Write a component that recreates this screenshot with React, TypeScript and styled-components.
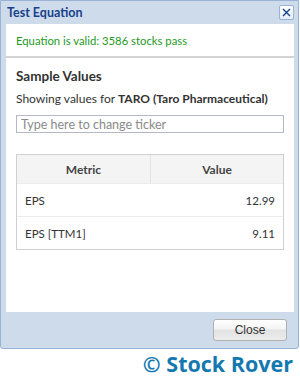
import React from 'react';
import styled, { createGlobalStyle } from 'styled-components';

const UI_FONT = "Lato, 'Liberation Sans', sans-serif";

const GlobalStyle = createGlobalStyle`
  html, body {
    margin: 0;
    padding: 0;
    background: #ffffff;
  }
  body {
    font-family: ${UI_FONT};
  }
`;

const Page = styled.div`
  width: 300px;
  height: 382px;
  display: flex;
  flex-direction: column;
`;

const Window = styled.div`
  width: 299px;
  height: 350px;
  box-sizing: border-box;
  border: 1px solid #99b3d6;
  border-radius: 0 0 3px 3px;
  background: #cedbea;
  display: flex;
  flex-direction: column;
  padding: 0 4px 0 5px;
`;

const Header = styled.div`
  height: 23px;
  display: flex;
  align-items: center;
  justify-content: space-between;
  padding: 0 0 0 1px;
`;

const Title = styled.span`
  font-size: 12.5px;
  font-weight: 700;
  color: #15428b;
`;

const CloseIcon = styled.button`
  width: 15px;
  height: 15px;
  padding: 0;
  border: 1px solid #99b3d6;
  border-radius: 2px;
  background: linear-gradient(#ffffff, #e4ecf6);
  display: flex;
  align-items: center;
  justify-content: center;
`;

const Body = styled.div`
  flex: 0 0 288px;
  background: #ffffff;
  display: flex;
  flex-direction: column;
`;

const Status = styled.div`
  height: 34px;
  border-bottom: 2px solid #d4d4d4;
  box-sizing: border-box;
  display: flex;
  align-items: center;
  padding: 0 10px;
  font-size: 11.3px;
  color: #1e9a1e;
`;

const Section = styled.div`
  padding: 9px 10px 0;
  display: flex;
  flex-direction: column;
`;

const SectionTitle = styled.div`
  font-size: 13.5px;
  font-weight: 700;
  color: #333333;
  line-height: 18px;
`;

const Caption = styled.div`
  margin-top: 6px;
  font-size: 12px;
  color: #333333;
  line-height: 16px;
  white-space: nowrap;

  b {
    font-weight: 700;
  }
`;

const TickerInput = styled.input`
  margin-top: 8px;
  height: 18px;
  box-sizing: border-box;
  border: 1px solid #b5b8c8;
  padding: 0 4px;
  font-family: ${UI_FONT};
  font-size: 12.5px;
  color: #333333;
  outline: none;

  &::placeholder {
    color: #8a8a8a;
  }
`;

const Table = styled.div`
  margin-top: 21px;
  border: 1px solid #d0d0d0;
  display: flex;
  flex-direction: column;
`;

const HeadRow = styled.div`
  display: grid;
  grid-template-columns: 133px 1fr;
  height: 28px;
  background: #f4f4f4;
  border-bottom: 1px solid #ececec;
`;

const HeadCell = styled.div`
  display: flex;
  align-items: center;
  justify-content: center;
  font-size: 12px;
  font-weight: 700;
  color: #444444;

  & + & {
    border-left: 1px solid #e4e4e4;
  }
`;

const Row = styled.div<{ $last?: boolean }>`
  display: flex;
  align-items: center;
  justify-content: space-between;
  height: 32px;
  padding: 0 8px;
  font-size: 11.5px;
  color: #333333;
  border-bottom: ${(p) => (p.$last ? 'none' : '1px solid #ececec')};
`;

const Footer = styled.div`
  flex: 1;
  display: flex;
  align-items: center;
  justify-content: flex-end;
  padding-right: 7px;
`;

const Button = styled.button`
  width: 74px;
  height: 22px;
  border: 1px solid #b0b0b0;
  border-radius: 3px;
  background: linear-gradient(#ffffff 0%, #f4f4f4 45%, #e2e2e2 50%, #ececec 100%);
  font-family: 'Liberation Sans', Arial, sans-serif;
  font-size: 12px;
  color: #333333;
  padding: 0;
`;

const Brand = styled.div`
  flex: 1;
  display: flex;
  align-items: center;
  justify-content: flex-end;
  padding: 0 7px 4px 0;
  font-family: 'Open Sans', sans-serif;
  font-size: 21.5px;
  font-weight: 700;
  color: #1478b0;
`;

const rows = [
  { metric: 'EPS', value: '12.99' },
  { metric: 'EPS [TTM1]', value: '9.11' },
];

export default function App() {
  return (
    <Page>
      <GlobalStyle />
      <Window>
        <Header>
          <Title>Test Equation</Title>
          <CloseIcon aria-label="Close">
            <svg width="11" height="11" viewBox="0 0 11 11">
              <path d="M2 2 L9 9 M9 2 L2 9" stroke="#15428b" strokeWidth="1.4" />
            </svg>
          </CloseIcon>
        </Header>
        <Body>
          <Status>Equation is valid: 3586 stocks pass</Status>
          <Section>
            <SectionTitle>Sample Values</SectionTitle>
            <Caption>
              Showing values for <b>TARO (Taro Pharmaceutical)</b>
            </Caption>
            <TickerInput placeholder="Type here to change ticker" />
            <Table>
              <HeadRow>
                <HeadCell>Metric</HeadCell>
                <HeadCell>Value</HeadCell>
              </HeadRow>
              {rows.map((r, i) => (
                <Row key={r.metric} $last={i === rows.length - 1}>
                  <span>{r.metric}</span>
                  <span>{r.value}</span>
                </Row>
              ))}
            </Table>
          </Section>
        </Body>
        <Footer>
          <Button>Close</Button>
        </Footer>
      </Window>
      <Brand>© Stock Rover</Brand>
    </Page>
  );
}
